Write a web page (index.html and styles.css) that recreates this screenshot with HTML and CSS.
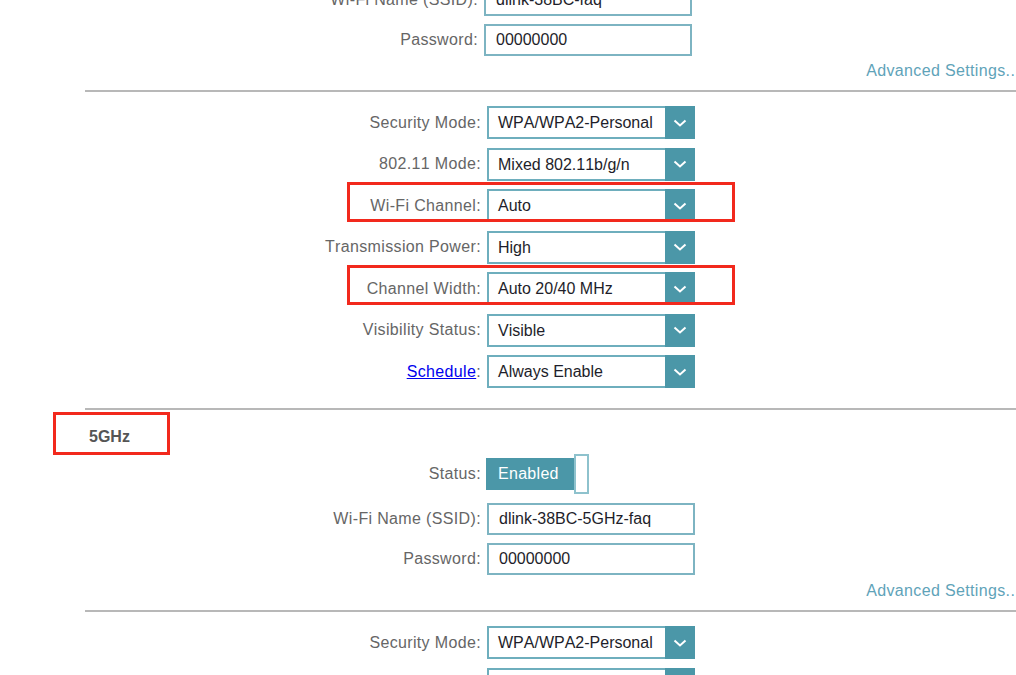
FILE: index.html
```html
<!DOCTYPE html>
<html>
<head>
  <title>Wireless Settings</title>
  <link rel="stylesheet" href="styles.css">
</head>
<body>

  <div class="page">

    <!-- 2.4GHz basic -->
    <div class="group">
      <div class="row row-narrow">
        <span class="label">Wi-Fi Name (SSID):</span>
        <div class="input">dlink-38BC-faq</div>
      </div>
      <div class="row row-narrow">
        <span class="label">Password:</span>
        <div class="input">00000000</div>
      </div>
    </div>
    <div class="advanced">Advanced Settings...</div>
    <div class="divider"></div>

    <!-- 2.4GHz advanced -->
    <div class="group group-select">
      <div class="row">
        <span class="label">Security Mode:</span>
        <div class="select"><span class="value">WPA/WPA2-Personal</span><span class="arrow"><svg width="14" height="8" viewBox="0 0 14 8"><polyline points="1.5,1.5 7,6.5 12.5,1.5" fill="none" stroke="#fff" stroke-width="2"/></svg></span></div>
      </div>
      <div class="row">
        <span class="label">802.11 Mode:</span>
        <div class="select"><span class="value">Mixed 802.11b/g/n</span><span class="arrow"><svg width="14" height="8" viewBox="0 0 14 8"><polyline points="1.5,1.5 7,6.5 12.5,1.5" fill="none" stroke="#fff" stroke-width="2"/></svg></span></div>
      </div>
      <div class="row marked">
        <span class="label">Wi-Fi Channel:</span>
        <div class="select"><span class="value">Auto</span><span class="arrow"><svg width="14" height="8" viewBox="0 0 14 8"><polyline points="1.5,1.5 7,6.5 12.5,1.5" fill="none" stroke="#fff" stroke-width="2"/></svg></span></div>
      </div>
      <div class="row">
        <span class="label">Transmission Power:</span>
        <div class="select"><span class="value">High</span><span class="arrow"><svg width="14" height="8" viewBox="0 0 14 8"><polyline points="1.5,1.5 7,6.5 12.5,1.5" fill="none" stroke="#fff" stroke-width="2"/></svg></span></div>
      </div>
      <div class="row marked">
        <span class="label">Channel Width:</span>
        <div class="select"><span class="value">Auto 20/40 MHz</span><span class="arrow"><svg width="14" height="8" viewBox="0 0 14 8"><polyline points="1.5,1.5 7,6.5 12.5,1.5" fill="none" stroke="#fff" stroke-width="2"/></svg></span></div>
      </div>
      <div class="row">
        <span class="label">Visibility Status:</span>
        <div class="select"><span class="value">Visible</span><span class="arrow"><svg width="14" height="8" viewBox="0 0 14 8"><polyline points="1.5,1.5 7,6.5 12.5,1.5" fill="none" stroke="#fff" stroke-width="2"/></svg></span></div>
      </div>
      <div class="row">
        <span class="label"><a href="#">Schedule</a>:</span>
        <div class="select"><span class="value">Always Enable</span><span class="arrow"><svg width="14" height="8" viewBox="0 0 14 8"><polyline points="1.5,1.5 7,6.5 12.5,1.5" fill="none" stroke="#fff" stroke-width="2"/></svg></span></div>
      </div>
    </div>
    <div class="divider divider-band"></div>

    <!-- 5GHz -->
    <div class="band">5GHz</div>
    <div class="row row-status">
      <span class="label">Status:</span>
      <div class="toggle"><span class="toggle-on">Enabled</span><span class="knob"></span></div>
    </div>
    <div class="group group-5g">
      <div class="row">
        <span class="label">Wi-Fi Name (SSID):</span>
        <div class="input">dlink-38BC-5GHz-faq</div>
      </div>
      <div class="row">
        <span class="label">Password:</span>
        <div class="input">00000000</div>
      </div>
    </div>
    <div class="advanced advanced-5g">Advanced Settings...</div>
    <div class="divider"></div>

    <div class="group group-select">
      <div class="row">
        <span class="label">Security Mode:</span>
        <div class="select"><span class="value">WPA/WPA2-Personal</span><span class="arrow"><svg width="14" height="8" viewBox="0 0 14 8"><polyline points="1.5,1.5 7,6.5 12.5,1.5" fill="none" stroke="#fff" stroke-width="2"/></svg></span></div>
      </div>
      <div class="row">
        <span class="label">802.11 Mode:</span>
        <div class="select"><span class="value">Mixed 802.11a/n/ac</span><span class="arrow"><svg width="14" height="8" viewBox="0 0 14 8"><polyline points="1.5,1.5 7,6.5 12.5,1.5" fill="none" stroke="#fff" stroke-width="2"/></svg></span></div>
      </div>
    </div>

  </div>

</body>
</html>
```

FILE: styles.css
```css
body {
  font-family: 'Liberation Sans', Arial, sans-serif;
  font-size: 16px;
  font-kerning: none;
  background-color: #fff;
  margin: 0;
  padding: 0;
  height: 675px;
  overflow: hidden;
}

.page {
  margin-top: -16px;
}

/* Rows */
.group {
  display: flex;
  flex-direction: column;
  gap: 8px;
}

.group-select {
  gap: 8.5px;
  margin-top: 14px;
}

.row {
  display: flex;
  align-items: center;
  height: 32px;
  position: relative;
}

.label {
  width: 487px;
  flex-shrink: 0;
  box-sizing: border-box;
  padding-right: 6px;
  text-align: right;
  color: #666;
  letter-spacing: 0.35px;
}

.row-narrow .label {
  width: 484px;
}

.label a {
  color: #0000ee;
  text-decoration: underline;
}

/* Text inputs */
.input {
  width: 208px;
  height: 32px;
  box-sizing: border-box;
  border: 2px solid #7db4c2;
  padding-left: 10px;
  line-height: 28px;
  color: #1e1e2a;
}

/* Drop downs */
.group-select .row {
  height: 33px;
}

.select {
  display: flex;
  width: 208px;
  height: 33px;
  box-sizing: border-box;
  border: 2px solid #6eaebd;
  border-right: none;
}

.select .value {
  flex: 1;
  padding-left: 9px;
  line-height: 29px;
  color: #1e1e2a;
  white-space: nowrap;
  overflow: hidden;
}

.select .arrow {
  width: 30px;
  margin: -2px 0;
  background-color: #4b97a8;
  display: flex;
  align-items: center;
  justify-content: center;
}

/* Red annotation boxes */
.marked::after {
  content: '';
  position: absolute;
  left: 347px;
  top: -7px;
  width: 388px;
  height: 40px;
  box-sizing: border-box;
  border: 3px solid #f2291d;
}

.advanced {
  text-align: right;
  margin-right: -4px;
  margin-top: 6px;
  line-height: 18px;
  color: #5fa3b9;
  letter-spacing: 0.35px;
}

.advanced-5g {
  margin-top: 7px;
}

.divider {
  margin: 10px 0 0 85px;
  border-top: 2px solid #b8b8b8;
}

.divider-band {
  margin-top: 20px;
}

/* 5GHz header */
.band {
  position: relative;
  margin-top: 18px;
  padding-left: 89px;
  line-height: 18px;
  font-weight: bold;
  color: #555;
}

.band::after {
  content: '';
  position: absolute;
  left: 53px;
  top: -16px;
  width: 117px;
  height: 43px;
  box-sizing: border-box;
  border: 3px solid #f2291d;
}

/* Status toggle */
.row-status {
  margin-top: 12px;
}

.row-status .label {
  width: 486px;
  padding-right: 5px;
}

.toggle {
  display: flex;
  align-items: center;
}

.toggle-on {
  width: 89px;
  height: 32px;
  box-sizing: border-box;
  padding-left: 12px;
  line-height: 32px;
  background-color: #4b97a8;
  color: #fff;
  letter-spacing: 0.3px;
}

.knob {
  width: 15px;
  height: 40px;
  margin-left: -1px;
  box-sizing: border-box;
  border: 2px solid #8ec2cd;
  background-color: #fff;
}

.group-5g {
  margin-top: 13px;
}
```
